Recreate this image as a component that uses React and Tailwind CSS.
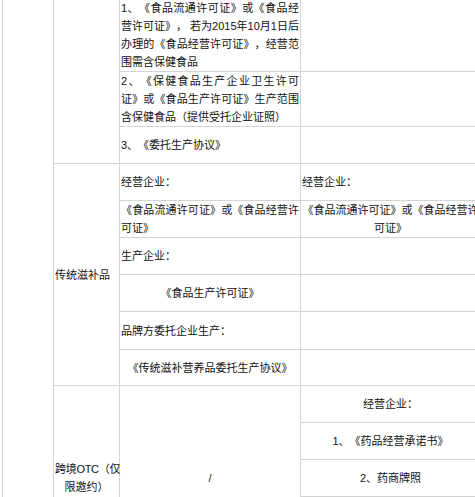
import React from "react";

const cell = "border border-[#d4d4d4] px-[1px] py-0 align-middle";

export default function App() {
  return (
    <div className="h-[497px] w-[475px] overflow-hidden bg-white font-['Liberation_Sans','Noto_Sans_CJK_SC',sans-serif] text-[11px] leading-[18px] text-[#111] [text-spacing-trim:space-all]">
      <table className="-mt-[2px] ml-[2px] w-[478px] table-fixed border-collapse">
        <colgroup>
          <col className="w-[51px]" />
          <col className="w-[66px]" />
          <col className="w-[181px]" />
          <col className="w-[180px]" />
        </colgroup>
        <tbody>
          {/* 保健食品 block */}
          <tr className="h-[73px]">
            <td rowSpan={14} className={cell} />
            <td rowSpan={3} className={cell} />
            <td className={`${cell} text-justify`}>
              1、《食品流通许可证》或《食品经营许可证》， 若为2015年10月1日后办理的《食品经营许可证》，经营范围需含保健食品
            </td>
            <td className={cell} />
          </tr>
          <tr className="h-[55px]">
            <td className={`${cell} text-justify`}>
              2、《保健食品生产企业卫生许可证》或《食品生产许可证》生产范围含保健食品（提供受托企业证照）
            </td>
            <td className={cell} />
          </tr>
          <tr className="h-[37px]">
            <td className={cell}>3、《委托生产协议》</td>
            <td className={cell} />
          </tr>

          {/* 传统滋补品 */}
          <tr className="h-[37px]">
            <td rowSpan={6} className={cell}>传统滋补品</td>
            <td className={cell}>经营企业：</td>
            <td className={cell}>经营企业：</td>
          </tr>
          <tr className="h-[37px]">
            <td className={`${cell} text-justify`}>《食品流通许可证》或《食品经营许可证》</td>
            <td className={`${cell} text-center`}>《食品流通许可证》或《食品经营许可证》</td>
          </tr>
          <tr className="h-[37px]">
            <td className={cell}>生产企业：</td>
            <td className={cell} />
          </tr>
          <tr className="h-[37px]">
            <td className={`${cell} text-center`}>《食品生产许可证》</td>
            <td className={cell} />
          </tr>
          <tr className="h-[38px]">
            <td className={cell}>品牌方委托企业生产：</td>
            <td className={cell} />
          </tr>
          <tr className="h-[36px]">
            <td className={`${cell} text-center`}>《传统滋补营养品委托生产协议》</td>
            <td className={cell} />
          </tr>

          {/* 跨境OTC */}
          <tr className="h-[37px]">
            <td rowSpan={5} className={`${cell} px-0 text-center`}>
              <span className="whitespace-nowrap tracking-[-0.3px]">跨境OTC（仅</span>
              <br />
              限邀约）
            </td>
            <td rowSpan={5} className={`${cell} text-center`}>/</td>
            <td className={`${cell} text-center`}>经营企业：</td>
          </tr>
          <tr className="h-[37px]">
            <td className={`${cell} text-center`}>1、《药品经营承诺书》</td>
          </tr>
          <tr className="h-[37px]">
            <td className={`${cell} text-center`}>2、药商牌照</td>
          </tr>
          <tr className="h-[37px]">
            <td className={`${cell} text-center`}>3、《进口药品注册证》</td>
          </tr>
          <tr className="h-[37px]">
            <td className={`${cell} text-center`}>4、《委托生产协议》</td>
          </tr>
        </tbody>
      </table>
    </div>
  );
}
